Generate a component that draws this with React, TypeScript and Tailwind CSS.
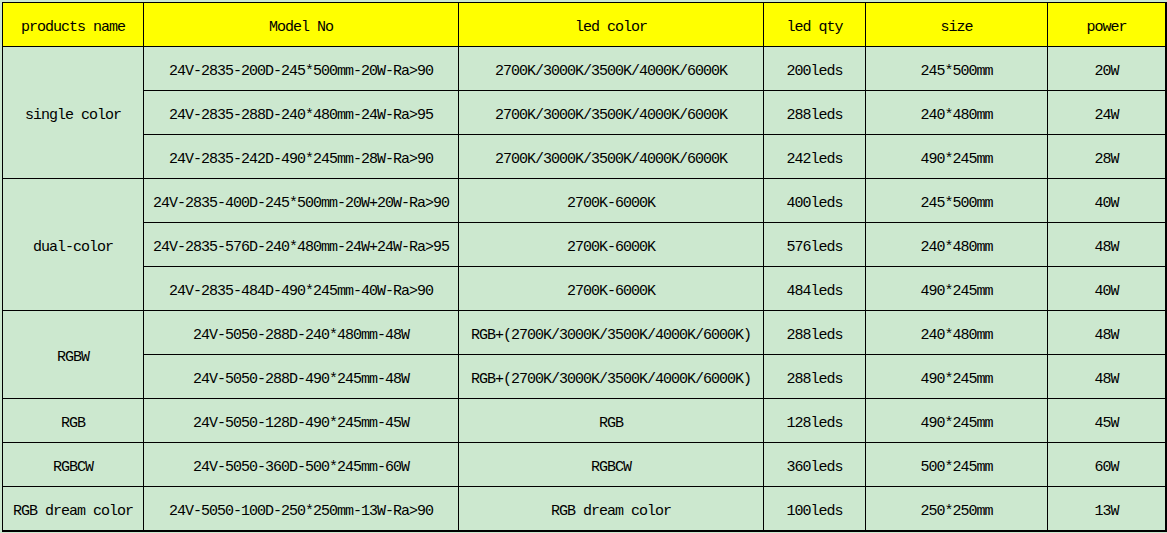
import React from "react";

interface Row {
    model: string;
    color: string;
    qty: string;
    size: string;
    power: string;
}

interface Group {
    name: string;
    rows: Row[];
}

const headers = ["products name", "Model No", "led color", "led qty", "size", "power"];

const K5 = "2700K/3000K/3500K/4000K/6000K";

const groups: Group[] = [
    {
        name: "single color",
        rows: [
            { model: "24V-2835-200D-245*500mm-20W-Ra>90", color: K5, qty: "200leds", size: "245*500mm", power: "20W" },
            { model: "24V-2835-288D-240*480mm-24W-Ra>95", color: K5, qty: "288leds", size: "240*480mm", power: "24W" },
            { model: "24V-2835-242D-490*245mm-28W-Ra>90", color: K5, qty: "242leds", size: "490*245mm", power: "28W" },
        ],
    },
    {
        name: "dual-color",
        rows: [
            { model: "24V-2835-400D-245*500mm-20W+20W-Ra>90", color: "2700K-6000K", qty: "400leds", size: "245*500mm", power: "40W" },
            { model: "24V-2835-576D-240*480mm-24W+24W-Ra>95", color: "2700K-6000K", qty: "576leds", size: "240*480mm", power: "48W" },
            { model: "24V-2835-484D-490*245mm-40W-Ra>90", color: "2700K-6000K", qty: "484leds", size: "490*245mm", power: "40W" },
        ],
    },
    {
        name: "RGBW",
        rows: [
            { model: "24V-5050-288D-240*480mm-48W", color: "RGB+(" + K5 + ")", qty: "288leds", size: "240*480mm", power: "48W" },
            { model: "24V-5050-288D-490*245mm-48W", color: "RGB+(" + K5 + ")", qty: "288leds", size: "490*245mm", power: "48W" },
        ],
    },
    {
        name: "RGB",
        rows: [{ model: "24V-5050-128D-490*245mm-45W", color: "RGB", qty: "128leds", size: "490*245mm", power: "45W" }],
    },
    {
        name: "RGBCW",
        rows: [{ model: "24V-5050-360D-500*245mm-60W", color: "RGBCW", qty: "360leds", size: "500*245mm", power: "60W" }],
    },
    {
        name: "RGB dream color",
        rows: [{ model: "24V-5050-100D-250*250mm-13W-Ra>90", color: "RGB dream color", qty: "100leds", size: "250*250mm", power: "13W" }],
    },
];

const spanClass: Record<number, string> = {
    1: "row-span-1",
    2: "row-span-2",
    3: "row-span-3",
};

function Cell({ children, className = "" }: { children: React.ReactNode; className?: string }) {
    return (
        <div className={`flex items-center justify-center whitespace-nowrap pt-[7px] ${className}`}>
            {children}
        </div>
    );
}

export default function App() {
    return (
        <div className="min-h-[533px] w-[1167px] bg-[#cce8cf] p-[2px]">
            <div
                className="grid w-fit grid-cols-[140px_314px_304px_101px_181px_117px] auto-rows-[43px] gap-px border-l border-t border-r-2 border-b-2 border-black bg-black text-[15px] tracking-[-1px] text-black"
                style={{ fontFamily: '"Liberation Mono", "DejaVu Sans Mono", monospace' }}
            >
                {headers.map((h) => (
                    <Cell key={h} className="bg-[#ffff00]">
                        {h}
                    </Cell>
                ))}
                {groups.map((g) => (
                    <React.Fragment key={g.name}>
                        <Cell className={`col-start-1 bg-[#cce8cf] ${spanClass[g.rows.length]}`}>{g.name}</Cell>
                        {g.rows.map((r, i) => (
                            <React.Fragment key={i}>
                                <Cell className="col-start-2 bg-[#cce8cf]">{r.model}</Cell>
                                <Cell className="bg-[#cce8cf]">{r.color}</Cell>
                                <Cell className="bg-[#cce8cf]">{r.qty}</Cell>
                                <Cell className="bg-[#cce8cf]">{r.size}</Cell>
                                <Cell className="bg-[#cce8cf]">{r.power}</Cell>
                            </React.Fragment>
                        ))}
                    </React.Fragment>
                ))}
            </div>
        </div>
    );
}
